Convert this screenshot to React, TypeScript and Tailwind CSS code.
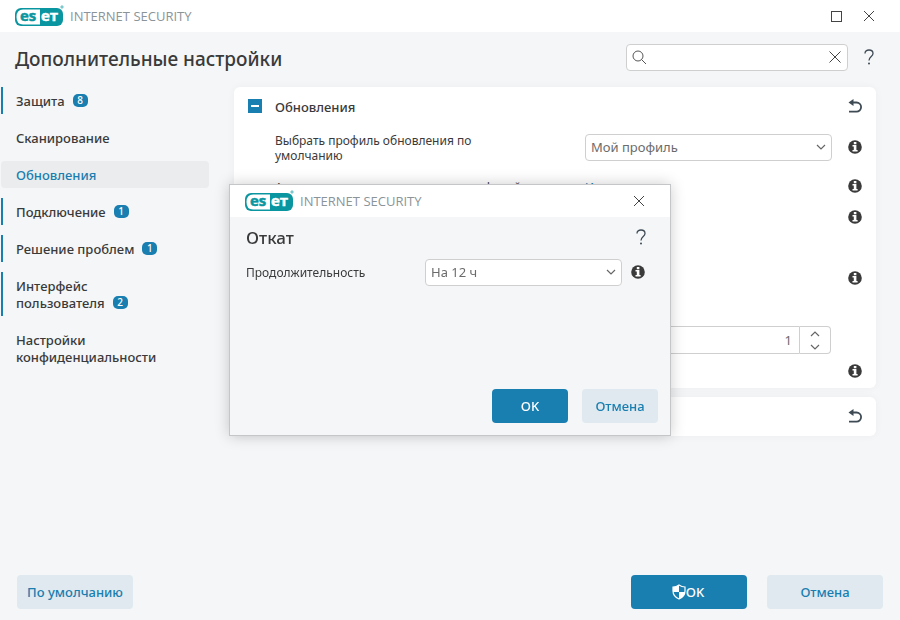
import React from 'react'

interface NavItem {
  label: string
  count?: number
  active?: boolean
}

const navItems: NavItem[] = [
  { label: 'Защита', count: 8 },
  { label: 'Сканирование' },
  { label: 'Обновления', active: true },
  { label: 'Подключение', count: 1 },
  { label: 'Решение проблем', count: 1 },
  { label: 'Интерфейс пользователя', count: 2 },
  { label: 'Настройки конфиденциальности' },
]

const Brand: React.FC = () => (
  <div className="flex items-center gap-1">
    <svg width="51" height="24" viewBox="0 0 51 24" aria-label="ESET">
      <rect x="0" y="4" width="48" height="18" rx="6" fill="#0a96a0" />
      <path
        d="M25 5.500H8Q1.500 5.500 1.500 13T8 20.500H25Z"
        fill="#fff"
      />
      <g fontSize="15" fontWeight="700" fontFamily="Open Sans, sans-serif">
        <text x="5" y="17" fill="#0a96a0" stroke="#0a96a0" strokeWidth="0.5">
          es
        </text>
        <text x="26" y="17" fill="#fff" stroke="#fff" strokeWidth="0.5">
          eт
        </text>
      </g>
      <circle cx="47" cy="3" r="1.2" fill="#7cc8cd" stroke="#7cc8cd" />
    </svg>
    <span className="pt-[2px] font-['Open_Sans',sans-serif] text-[13px] text-[#8a9499]">
      INTERNET SECURITY
    </span>
  </div>
)

const CloseIcon: React.FC = () => (
  <svg width="12" height="12" viewBox="0 0 12 12" stroke="#444" fill="none">
    <path d="M1 1l10 10M11 1L1 11" />
  </svg>
)

const ChevronIcon: React.FC<{ up?: boolean }> = ({ up }) => (
  <svg width="10" height="6" viewBox="0 0 10 6" stroke="#666" fill="none">
    <path d={up ? 'M1 5l4-4 4 4' : 'M1 1l4 4 4-4'} strokeWidth="1.2" />
  </svg>
)

const HelpButton: React.FC = () => (
  <button type="button" aria-label="Справка">
    <svg width="10" height="16" viewBox="0 0 10 16" fill="none">
      <path
        d="M1 4.5C1 2 2.8 1 5 1s4 1.200 4 3.500C9 7.500 5 7.500 5 11.500"
        stroke="#3e4a54"
        strokeWidth="1.300"
      />
      <circle cx="5" cy="14.500" r="1" fill="#3e4a54" />
    </svg>
  </button>
)

const InfoButton: React.FC = () => (
  <button type="button" aria-label="Сведения" className="shrink-0">
    <svg width="14" height="14" viewBox="0 0 14 14">
      <circle cx="7" cy="7" r="6.800" fill="#3a3a3a" />
      <path
        d="M5.800 2h2.600v2.200H5.800zM4.500 5h3.900v5h1.200v1.500H4.500V10h1.300V6.500H4.500z"
        fill="#fff"
      />
    </svg>
  </button>
)

const UndoButton: React.FC = () => (
  <button type="button" aria-label="Восстановить" className="pb-[2px]">
    <svg width="14" height="14" viewBox="0 0 14 14" fill="none">
      <path
        d="M3 3.500h5.500a4.500 4.500 0 0 1 0 9.200H1"
        stroke="#3e4a54"
        strokeWidth="1.800"
      />
      <path d="M0.500 3.500L5.500 0v7z" fill="#3e4a54" />
    </svg>
  </button>
)

const ShieldIcon: React.FC = () => (
  <svg width="14" height="16" viewBox="0 0 14 16">
    <path
      d="M7 1C5 2.500 3 3 1 3v4c0 4 2.500 6.500 6 8 3.500-1.500 6-4 6-8V3c-2 0-4-.5-6-2z"
      fill="none"
      stroke="#fff"
      strokeWidth="1.200"
    />
    <path d="M7 1C5 2.500 3 3 1 3v5h6zM7 8h6c-.3 3.500-2.700 5.700-6 7z" fill="#fff" />
  </svg>
)

interface SelectProps {
  id: string
  value: string
}

const Select: React.FC<SelectProps> = ({ id, value }) => (
  <div className="grid w-full items-center">
    <select
      id={id}
      className="col-start-1 row-start-1 h-[27px] w-full appearance-none rounded border border-[#cfcfcf] bg-white px-[5px] pt-[2px] text-[13px] text-[#6b6b6b]"
    >
      <option>{value}</option>
    </select>
    <span className="pointer-events-none col-start-1 row-start-1 mr-[6px] justify-self-end">
      <ChevronIcon />
    </span>
  </div>
)

const Sidebar: React.FC = () => (
  <nav className="w-[209px] shrink-0 pl-px">
    <ul className="flex flex-col gap-[10px]">
      {navItems.map(item => (
        <li key={item.label}>
          <a
            href="#"
            className={`flex items-end border-l-2 pt-[6px] pb-1 pl-[13px] text-[13px] leading-[17px] font-medium ${
              item.active
                ? 'rounded border-transparent bg-[#ebecee] text-[#197eb0]'
                : item.count
                  ? 'border-[#197eb0] text-[#3a3a3a]'
                  : 'border-transparent text-[#3a3a3a]'
            }`}
          >
            <span className={item.label.length > 20 ? 'w-min' : ''}>
              {item.label}
            </span>
            {item.count && (
              <span className="mb-[3px] ml-2 flex h-[13px] w-[15px] items-center justify-center rounded-[5px] bg-[#197eb0] text-[10px] text-white">
                {item.count}
              </span>
            )}
          </a>
        </li>
      ))}
    </ul>
  </nav>
)

const Settings: React.FC = () => (
  <main className="mr-6 ml-[25px] flex min-w-0 flex-1 flex-col gap-[9px]">
    <section className="rounded-md bg-white pr-[14px] pl-[14px] shadow-[0_0_8px_rgba(0,0,0,0.04)]">
      <div className="flex h-10 items-center">
        <button
          type="button"
          aria-label="Свернуть"
          className="mb-[2px] flex size-[14px] items-center justify-center bg-[#197eb0]"
        >
          <span className="h-[2px] w-2 bg-white" />
        </button>
        <h2 className="ml-[13px] flex-1 pt-[2px] text-[13px] font-medium">
          Обновления
        </h2>
        <UndoButton />
      </div>
      <div className="flex h-10 items-center pl-[27px]">
        <div className="w-[310px] shrink-0">
          <label
            htmlFor="profile"
            className="block w-[200px] pt-[2px] text-[12px] leading-[15px]"
          >
            Выбрать профиль обновления по умолчанию
          </label>
        </div>
        <div className="mr-4 flex-1">
          <Select id="profile" value="Мой профиль" />
        </div>
        <InfoButton />
      </div>
      <div className="flex h-[38px] items-center pl-[27px] text-[12px]">
        <span className="w-[310px] shrink-0 pt-1">
          Автоматическое переключение профилей
        </span>
        <a href="#" className="flex-1 pt-1 text-[#197eb0]">
          Изменить
        </a>
        <InfoButton />
      </div>
      <div className="flex h-6 items-center justify-end">
        <InfoButton />
      </div>
      <div className="flex h-[97px] items-center justify-end">
        <InfoButton />
      </div>
      <div className="flex h-7 pr-[31px] pl-[337px]">
        <input
          type="text"
          aria-label="Количество снимков"
          defaultValue="1"
          className="min-w-0 flex-1 rounded-l border border-[#cfcfcf] bg-white px-[7px] pt-[2px] text-right text-[13px] text-[#6b6b6b]"
        />
        <div className="flex w-[31px] flex-col rounded-r border border-l-0 border-[#cfcfcf]">
          <button
            type="button"
            aria-label="Больше"
            className="flex flex-1 items-center justify-center"
          >
            <ChevronIcon up />
          </button>
          <button
            type="button"
            aria-label="Меньше"
            className="flex flex-1 items-center justify-center"
          >
            <ChevronIcon />
          </button>
        </div>
      </div>
      <div className="flex h-[34px] items-center justify-end">
        <InfoButton />
      </div>
    </section>
    <section className="flex h-[39px] items-center justify-end rounded-md bg-white px-[14px] shadow-[0_0_8px_rgba(0,0,0,0.04)]">
      <UndoButton />
    </section>
  </main>
)

const RollbackDialog: React.FC = () => (
  <div className="fixed inset-0 grid place-items-center">
    <div
      role="dialog"
      aria-label="Откат"
      className="w-[442px] border border-[#c4c6c8] bg-[#f4f6f8] shadow-[0_0_14px_rgba(0,0,0,0.2)]"
    >
      <header className="flex h-8 items-center justify-between bg-white pr-[25px] pl-[15px]">
        <Brand />
        <button type="button" aria-label="Закрыть">
          <CloseIcon />
        </button>
      </header>
      <div className="px-4">
        <div className="flex h-10 items-center justify-between pr-2">
          <h2 className="pt-[2px] text-[17px] font-medium">Откат</h2>
          <HelpButton />
        </div>
        <div className="flex h-[30px] items-center">
          <label htmlFor="duration" className="w-[179px] pt-[2px] text-[12px]">
            Продолжительность
          </label>
          <div className="mr-[9px] w-[197px]">
            <Select id="duration" value="На 12 ч" />
          </div>
          <InfoButton />
        </div>
      </div>
      <footer className="mt-[102px] flex justify-end gap-[14px] pr-3 pb-3 text-[13px] font-medium">
        <button
          type="button"
          className="h-[34px] w-[76px] rounded bg-[#197eb0] pt-[2px] text-white"
        >
          OK
        </button>
        <button
          type="button"
          className="h-[34px] w-[76px] rounded bg-[#dfe9ef] pt-[2px] text-[#197eb0]"
        >
          Отмена
        </button>
      </footer>
    </div>
  </div>
)

const App: React.FC = () => (
  <div className="flex min-h-screen flex-col bg-[#f4f6f8] font-['Noto_Sans',sans-serif] text-[#3a3a3a]">
    <header className="flex h-8 items-center justify-between bg-white pr-[25px] pl-[15px]">
      <Brand />
      <div className="flex items-center gap-[21px]">
        <button
          type="button"
          aria-label="Развернуть"
          className="size-[11px] border border-[#444]"
        />
        <button type="button" aria-label="Закрыть">
          <CloseIcon />
        </button>
      </div>
    </header>
    <div className="flex h-[55px] items-center pr-[26px] pb-[5px] pl-[15px]">
      <h1 className="flex-1 pt-1 text-[19px] font-medium">
        Дополнительные настройки
      </h1>
      <div className="mr-4 flex h-[27px] w-[222px] items-center rounded border border-[#cfcfcf] bg-white px-[5px]">
        <svg width="15" height="15" viewBox="0 0 15 15" stroke="#555" fill="none">
          <circle cx="6" cy="6" r="5" />
          <path d="M9.500 9.500l4.500 4.500" />
        </svg>
        <input
          type="text"
          aria-label="Поиск"
          className="min-w-0 flex-1 px-1 text-[13px] outline-none"
        />
        <button type="button" aria-label="Очистить">
          <svg width="14" height="14" viewBox="0 0 14 14" stroke="#444">
            <path d="M1.500 1.500l11 11M12.500 1.500l-11 11" />
          </svg>
        </button>
      </div>
      <HelpButton />
    </div>
    <div className="flex flex-1 items-start">
      <Sidebar />
      <Settings />
    </div>
    <footer className="flex items-center gap-5 pr-[17px] pb-[11px] pl-[17px] text-[13px] font-medium">
      <button
        type="button"
        className="mr-auto h-[34px] w-[116px] rounded bg-[#dfe9ef] pt-[2px] text-[#197eb0]"
      >
        По умолчанию
      </button>
      <button
        type="button"
        className="flex h-[34px] w-[116px] items-center justify-center rounded bg-[#197eb0] pr-[2px] text-white"
      >
        <ShieldIcon />
        <span className="pt-[2px]">OK</span>
      </button>
      <button
        type="button"
        className="h-[34px] w-[116px] rounded bg-[#dfe9ef] pt-[2px] text-[#197eb0]"
      >
        Отмена
      </button>
    </footer>
    <RollbackDialog />
  </div>
)

export default App
